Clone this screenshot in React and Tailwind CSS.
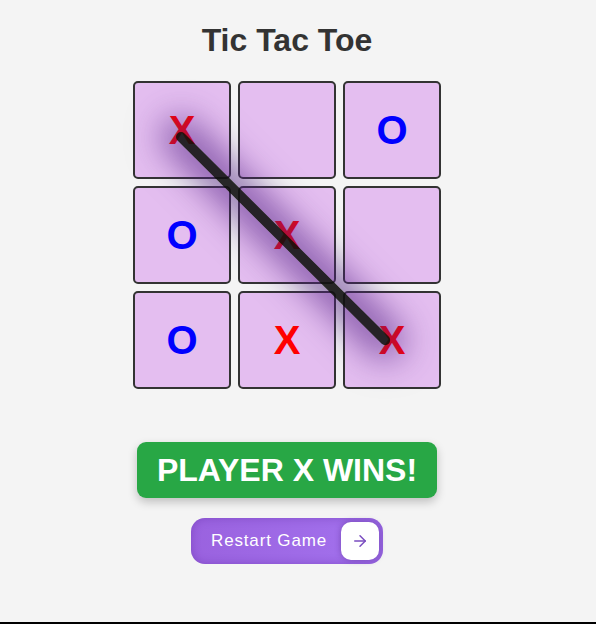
import React from "react";
import { ArrowRight } from "lucide-react";

const board = ["X", "", "O", "O", "X", "", "O", "X", "X"];

export default function App() {
  return (
    <div
      className="h-[624px] w-full border-b-2 border-black bg-[#f4f4f4] pr-[22px] flex flex-col items-center"
      style={{ fontFamily: '"Liberation Sans", Arial, sans-serif' }}
    >
      <h1 className="mt-[22px] text-[32px] leading-[36px] font-bold text-[#333]">Tic Tac Toe</h1>

      <div className="relative mt-[23px] grid grid-cols-[repeat(3,98px)] grid-rows-[repeat(3,98px)] gap-[7px]">
        {board.map((v, i) => (
          <div
            key={i}
            className="flex items-center justify-center rounded-[5px] border-2 border-[#333] bg-[#e4bef0] text-[40px] font-bold leading-none"
          >
            <span className={v === "X" ? "text-[#ff0000]" : "text-[#0000ff]"}>{v}</span>
          </div>
        ))}
        <div
          className="absolute left-[43px] top-[51px] h-[10px] w-[298px] origin-[5px_5px] rotate-[44.86deg] rounded-full bg-[rgba(17,17,17,0.9)] shadow-[0_0_34px_14px_rgba(80,30,130,0.62)]"
        />
      </div>

      <div className="mt-[53px] flex h-[56px] w-[300px] items-center justify-center rounded-[9px] bg-[#28a745] text-[32px] font-bold text-white shadow-[0_4px_10px_rgba(0,0,0,0.22)]">
        PLAYER X WINS!
      </div>

      <button className="mt-[20px] flex h-[46px] w-[192px] items-center justify-between rounded-[14px] bg-gradient-to-r from-[#9a62df] to-[#a372ee] pl-[20px] pr-[4px] text-[17px] tracking-[0.85px] text-white shadow-[inset_0_0_10px_rgba(80,30,150,0.35)]">
        <span>Restart Game</span>
        <span className="flex h-[38px] w-[38px] items-center justify-center rounded-[10px] bg-white shadow-[0_0_6px_rgba(60,20,110,0.4)]">
          <ArrowRight size={18} strokeWidth={2} color="#7a4cc0" />
        </span>
      </button>
    </div>
  );
}
